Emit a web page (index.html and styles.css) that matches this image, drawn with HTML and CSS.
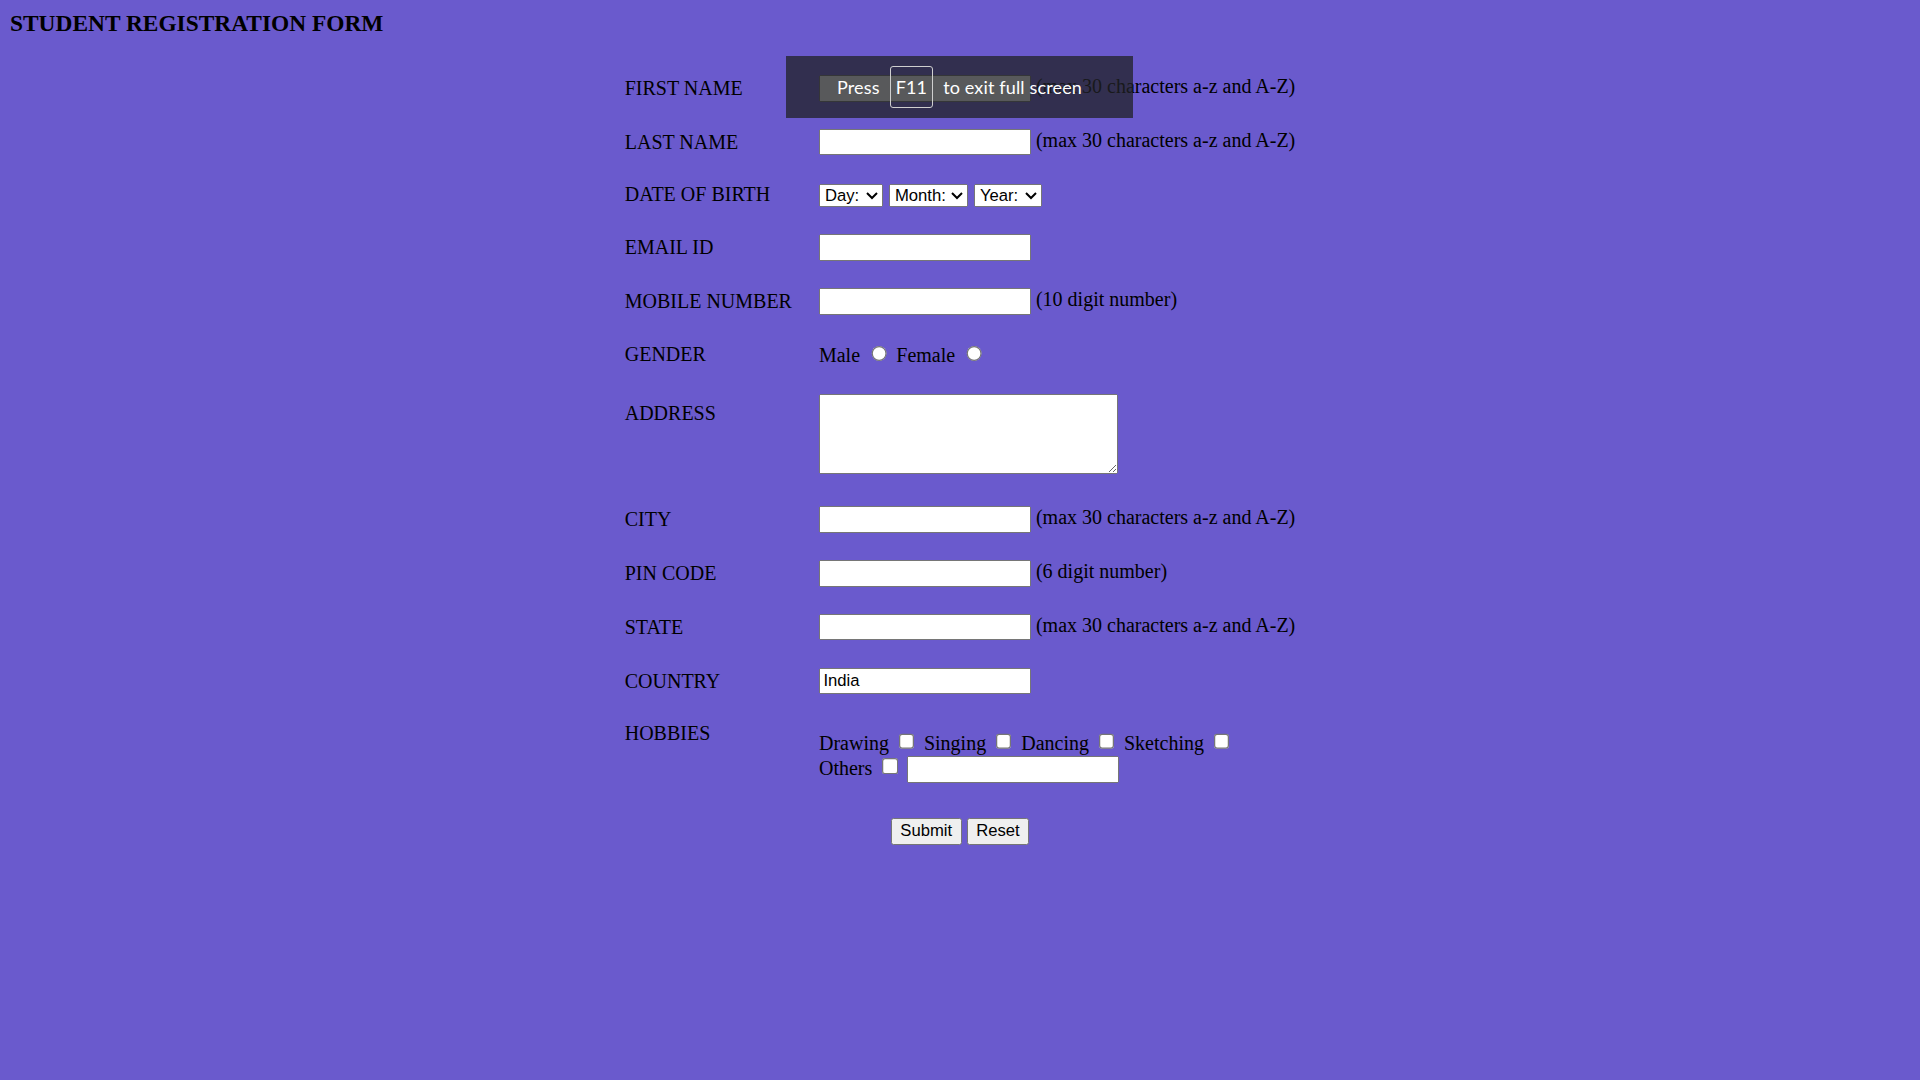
FILE: index.html
```html
<!DOCTYPE html>
<html lang="en">
<head>
<meta charset="utf-8">
<title>Student Registration Form</title>
<link rel="stylesheet" href="styles.css">
</head>
<body>
<div class="page">
  <h3 class="title">STUDENT REGISTRATION FORM</h3>
  <form class="reg-form">
    <table class="reg-table">
      <tr>
        <td>FIRST NAME</td>
        <td><input class="field" type="text" maxlength="30"> (max 30 characters a-z and A-Z)</td>
      </tr>
      <tr>
        <td>LAST NAME</td>
        <td><input class="field" type="text" maxlength="30"> (max 30 characters a-z and A-Z)</td>
      </tr>
      <tr>
        <td>DATE OF BIRTH</td>
        <td><select class="pick pick-day"><option>Day:</option><option>1</option><option>2</option><option>3</option><option>4</option><option>5</option><option>6</option><option>7</option><option>8</option><option>9</option><option>10</option><option>11</option><option>12</option><option>13</option><option>14</option><option>15</option><option>16</option><option>17</option><option>18</option><option>19</option><option>20</option><option>21</option><option>22</option><option>23</option><option>24</option><option>25</option><option>26</option><option>27</option><option>28</option><option>29</option><option>30</option><option>31</option></select>
          <select class="pick pick-month"><option>Month:</option><option>Jan</option><option>Feb</option><option>Mar</option><option>Apr</option><option>May</option><option>Jun</option><option>Jul</option><option>Aug</option><option>Sep</option><option>Oct</option><option>Nov</option><option>Dec</option></select>
          <select class="pick pick-year"><option>Year:</option><option>2014</option><option>2013</option><option>2012</option><option>2011</option><option>2010</option><option>2009</option><option>2008</option><option>2007</option><option>2006</option><option>2005</option><option>2004</option><option>2003</option><option>2002</option><option>2001</option><option>2000</option><option>1999</option><option>1998</option><option>1997</option><option>1996</option><option>1995</option><option>1994</option><option>1993</option><option>1992</option><option>1991</option><option>1990</option></select></td>
      </tr>
      <tr>
        <td>EMAIL ID</td>
        <td><input class="field" type="text" maxlength="100"></td>
      </tr>
      <tr>
        <td>MOBILE NUMBER</td>
        <td><input class="field" type="text" maxlength="10"> (10 digit number)</td>
      </tr>
      <tr>
        <td>GENDER</td>
        <td>Male <input class="choice" type="radio" name="gender" value="Male"> Female <input class="choice" type="radio" name="gender" value="Female"></td>
      </tr>
      <tr>
        <td>ADDRESS<br><br><br></td>
        <td><textarea class="area" rows="4" cols="30"></textarea></td>
      </tr>
      <tr>
        <td>CITY</td>
        <td><input class="field" type="text" maxlength="30"> (max 30 characters a-z and A-Z)</td>
      </tr>
      <tr>
        <td>PIN CODE</td>
        <td><input class="field" type="text" maxlength="6"> (6 digit number)</td>
      </tr>
      <tr>
        <td>STATE</td>
        <td><input class="field" type="text" maxlength="30"> (max 30 characters a-z and A-Z)</td>
      </tr>
      <tr>
        <td>COUNTRY</td>
        <td><input class="field" type="text" value="India" readonly></td>
      </tr>
      <tr>
        <td>HOBBIES<br><br><br></td>
        <td>Drawing <input class="choice" type="checkbox" value="Drawing"> Singing <input class="choice" type="checkbox" value="Singing"> Dancing <input class="choice" type="checkbox" value="Dancing"> Sketching <input class="choice" type="checkbox" value="Sketching"><br>
          Others <input class="choice" type="checkbox" value="Others"> <input class="field" type="text" maxlength="30"></td>
      </tr>
      <tr>
        <td class="actions" colspan="2"><input class="btn" type="submit" value="Submit"> <input class="btn" type="reset" value="Reset"></td>
      </tr>
    </table>
  </form>
</div>
<div class="fs-toast">
  <span class="fs-word">Press</span>
  <span class="fs-key">F11</span>
  <span class="fs-word">to exit full screen</span>
</div>
</body>
</html>
```

FILE: styles.css
```css
html {
  background: #6a5acd;
}

body {
  margin: 0;
  background: #6a5acd;
  color: #000;
  font-family: "Liberation Serif", "Times New Roman", serif;
  font-size: 16px;
}

.page {
  zoom: 1.25;
  padding: 8px;
}

.title {
  margin: 0 0 1em;
  font-size: 1.17em;
  font-weight: bold;
}

.reg-form {
  margin: 0;
}

.reg-table {
  margin: 0 auto;
  border-spacing: 2px;
}

.reg-table td {
  padding: 10.15px 10px;
  vertical-align: middle;
}

.field,
.pick,
.btn {
  font-family: "Liberation Sans", Arial, sans-serif;
  font-size: 13.333px;
}

.field {
  width: 169.6px;
  box-sizing: border-box;
}

.pick {
  box-sizing: border-box;
  margin-right: 0.8px;
}

.pick-day {
  width: 51.2px;
}

.pick-month {
  width: 63.2px;
}

.pick-year {
  width: 54.4px;
}

.area {
  font-family: "Liberation Mono", "Courier New", monospace;
  font-size: 13.333px;
  width: 239.6px;
  height: 63.6px;
  box-sizing: border-box;
}

.actions {
  text-align: center;
}

.fs-toast {
  position: absolute;
  left: 786px;
  top: 56px;
  width: 347px;
  height: 62px;
  box-sizing: border-box;
  background: rgba(32, 33, 36, 0.75);
  display: flex;
  align-items: center;
  justify-content: center;
  gap: 10px;
  color: #fff;
  font-family: Lato, "Noto Sans", sans-serif;
  font-size: 18px;
  letter-spacing: 0.15px;
}

.fs-key {
  height: 42px;
  box-sizing: border-box;
  padding: 0 5px;
  border: 1px solid #cfcfcf;
  border-radius: 3px;
  display: flex;
  align-items: center;
}
```
